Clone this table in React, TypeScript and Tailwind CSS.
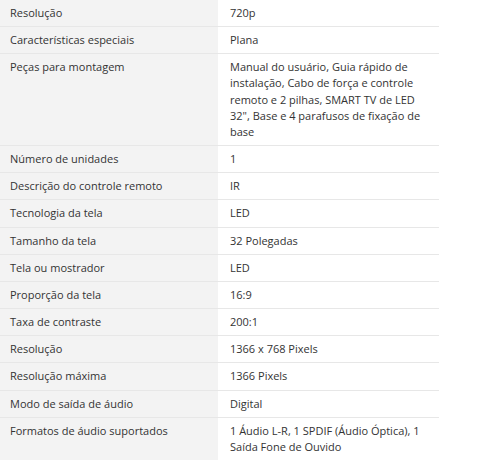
const rows: [string, string][] = [
  ["Resolução", "720p"],
  ["Características especiais", "Plana"],
  [
    "Peças para montagem",
    'Manual do usuário, Guia rápido de instalação, Cabo de força e controle remoto e 2 pilhas, SMART TV de LED 32", Base e 4 parafusos de fixação de base',
  ],
  ["Número de unidades", "1"],
  ["Descrição do controle remoto", "IR"],
  ["Tecnologia da tela", "LED"],
  ["Tamanho da tela", "32 Polegadas"],
  ["Tela ou mostrador", "LED"],
  ["Proporção da tela", "16:9"],
  ["Taxa de contraste", "200:1"],
  ["Resolução", "1366 x 768 Pixels"],
  ["Resolução máxima", "1366 Pixels"],
  ["Modo de saída de áudio", "Digital"],
  ["Formatos de áudio suportados", "1 Áudio L-R, 1 SPDIF (Áudio Óptica), 1 Saída Fone de Ouvido"],
];

const App = () => {
  return (
    <div className="w-[500px] h-[460px] overflow-hidden bg-white font-['Open_Sans',sans-serif] text-[11px] leading-[16.15px] text-[#333]">
      <table className="w-[439px] -mt-px border-collapse table-fixed">
        <colgroup>
          <col className="w-[218px]" />
          <col />
        </colgroup>
        <tbody>
          {rows.map(([label, value], i) => (
            <tr key={i} className="border-y border-[#e7e7e7]">
              <th scope="row" className="bg-[#f3f3f3] pl-[10px] pr-3 py-[5px] text-left font-normal align-top">
                {label}
              </th>
              <td className="pl-3 pr-3 py-[5px] align-top">{value}</td>
            </tr>
          ))}
        </tbody>
      </table>
    </div>
  );
};

export default App;
